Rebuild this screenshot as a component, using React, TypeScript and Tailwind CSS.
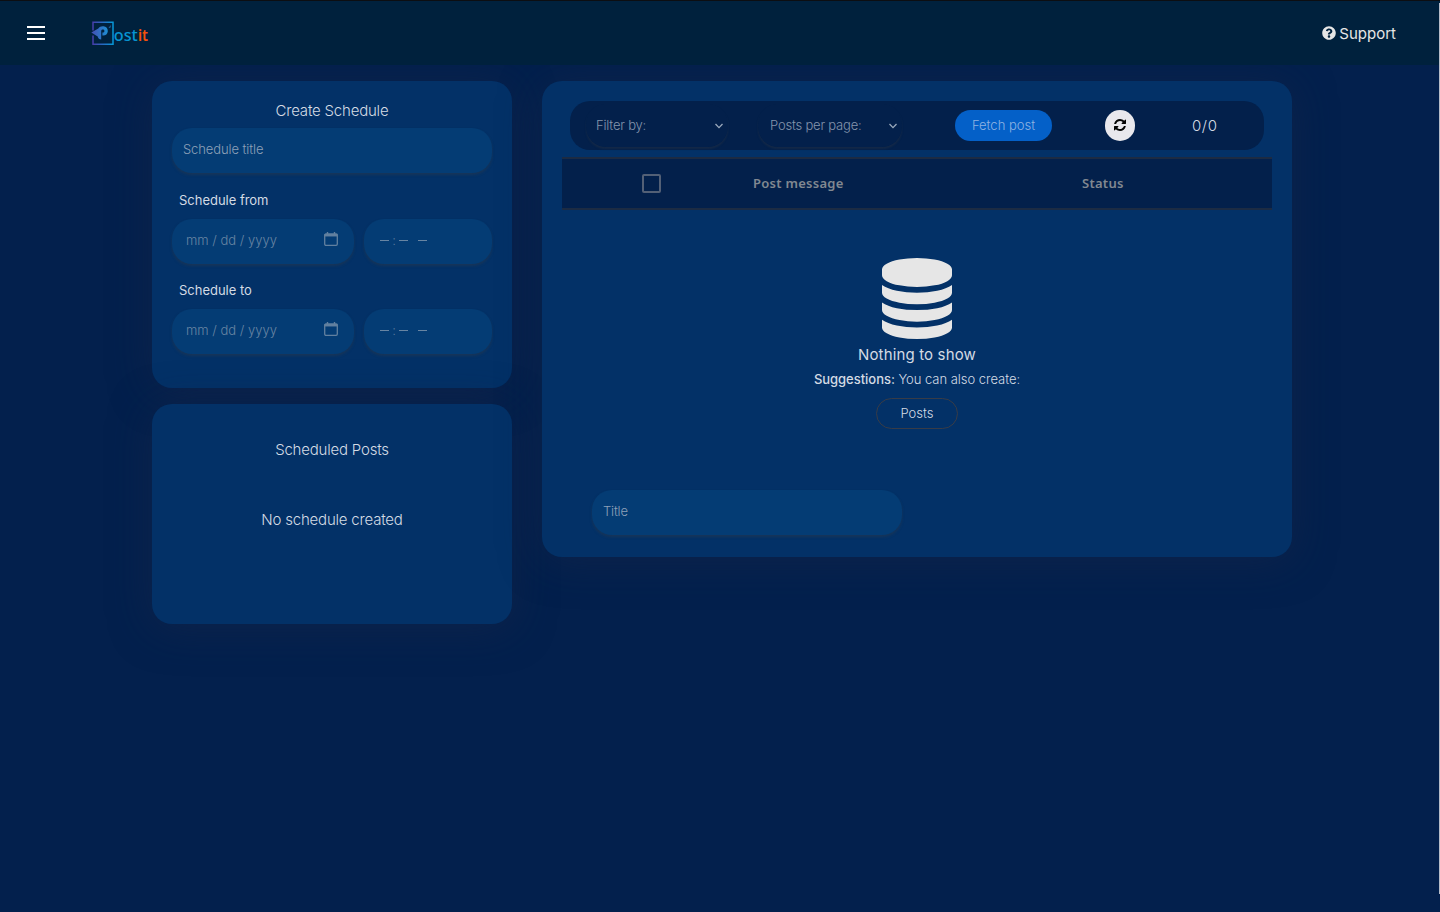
import type { ReactNode } from "react";
import { FaQuestionCircle } from "react-icons/fa";

const FIELD =
  "flex h-[45px] items-center rounded-[20px] bg-[#043c74] shadow-[0_2px_3px_rgba(60,60,60,0.35)]";
const CARD = "rounded-[20px] bg-[#033167] shadow-[0_4px_40px_rgba(22,38,72,0.55)]";

function Logo() {
  return (
    <svg width="58" height="26" viewBox="0 0 58 26" className="block">
      <defs>
        <linearGradient id="frame" gradientUnits="userSpaceOnUse" x1="1" x2="22" y1="0" y2="0">
          <stop offset="0" stopColor="#4a3aa8" />
          <stop offset="1" stopColor="#0698d8" />
        </linearGradient>
        <linearGradient id="bird" gradientUnits="userSpaceOnUse" x1="1" x2="17" y1="0" y2="0">
          <stop offset="0" stopColor="#4550b4" />
          <stop offset="1" stopColor="#1c90d4" />
        </linearGradient>
      </defs>
      <path d="M2 10.5V2.2H22V24.2H2V15.5" fill="none" stroke="url(#frame)" strokeWidth="1.5" />
      <path
        d="M0.3 12.6 7.3 8.4C8.4 6.7 10.5 6 12.4 6.2C15.2 6.4 17 8.6 16.8 11.2C16.6 14.2 14.3 15.8 11.4 15.4V12.6C12.7 12.7 13.4 11.9 13.4 10.9C13.3 9.8 12.3 9.3 11.3 9.6C10.4 9.9 10.2 10.6 10.2 11.4V19.6C8.4 19.4 7.1 18.6 6.7 16.6Z"
        fill="url(#bird)"
      />
      <path d="M17.5 7.8 20 5 19.4 7.8Z" fill="#246bb0" />
      <text x="22.8" y="20.5" fontFamily="Noto Sans, sans-serif" fontWeight="500" fontSize="16" textLength="24" lengthAdjust="spacingAndGlyphs" fill="#0795d3">ost</text>
      <text x="47" y="20.5" fontFamily="Noto Sans, sans-serif" fontWeight="600" fontSize="16" textLength="10" lengthAdjust="spacingAndGlyphs" fill="#f4510b">it</text>
    </svg>
  );
}

function CalendarIcon() {
  return (
    <svg width="14" height="14" viewBox="0 0 14 14" className="mb-1 block text-[#62809f]" fill="none" stroke="currentColor">
      <rect x="0.7" y="2" width="12.6" height="11.3" rx="1.2" strokeWidth="1.3" />
      <path d="M0.5 3.2H13.5" strokeWidth="2.5" />
      <path d="M3.5 0V2M10.5 0V2" strokeWidth="1.4" />
    </svg>
  );
}

function DatabaseIcon() {
  return (
    <svg width="70" height="81" viewBox="0 0 1536 1792" preserveAspectRatio="none" className="block" fill="#e6e6e6">
      <path d="M768 768q237 0 443-43t325-127v170q0 69-103 128t-280 93.5-385 34.5-385-34.5-280-93.5-103-128v-170q119 84 325 127t443 43zM768 1536q237 0 443-43t325-127v170q0 69-103 128t-280 93.5-385 34.5-385-34.5-280-93.5-103-128v-170q119 84 325 127t443 43zM768 1152q237 0 443-43t325-127v170q0 69-103 128t-280 93.5-385 34.5-385-34.5-280-93.5-103-128v-170q119 84 325 127t443 43zM768 0q208 0 385 34.5t280 93.5 103 128v128q0 69-103 128t-280 93.5-385 34.5-385-34.5-280-93.5-103-128v-128q0-69 103-128t280-93.5 385-34.5z" />
    </svg>
  );
}

function RefreshIcon() {
  return (
    <svg width="12" height="12" viewBox="0 128 1536 1536" className="mb-px block" fill="#050505">
      <path d="M1511 1056q0 5-1 7-64 268-268 434.5t-478 166.5q-146 0-282.5-55t-243.5-157l-129 129q-19 19-45 19t-45-19-19-45v-448q0-26 19-45t45-19h448q26 0 45 19t19 45-19 45l-137 137q71 66 161 102t187 36q134 0 250-65t186-179q11-17 53-117 8-23 30-23h192q13 0 22.5 9.5t9.5 22.5zm25-800v448q0 26-19 45t-45 19h-448q-26 0-45-19t-19-45 19-45l138-138q-148-137-349-137-134 0-250 65t-186 179q-11 17-53 117-8 23-30 23h-199q-13 0-22.5-9.5t-9.5-22.5v-7q65-268 270-434.5t480-166.5q146 0 284 55.5t245 156.5l130-129q19-19 45-19t45 19 19 45z" />
    </svg>
  );
}

function Select({ label, className }: { label: ReactNode; className: string }) {
  return (
    <div className={`flex h-[43px] items-center justify-between rounded-[20px] pr-[5px] text-[13px] tracking-[-0.2px] text-[#8595ad] shadow-[0_2px_2px_rgba(60,60,60,0.28)] ${className}`}>
      {label}
      <svg width="8" height="6" viewBox="0 0 8 6" fill="none" stroke="#9caabd" strokeWidth="1.3">
        <path d="M0.5 1 4 4.6 7.5 1" />
      </svg>
    </div>
  );
}

function DateRow() {
  return (
    <div className="flex gap-[10px] text-[13px] text-[#6885a3]">
      <div className={`${FIELD} w-[182px] justify-between pr-4 pb-0.5 pl-[14px]`}>
        <span>mm / dd / yyyy</span>
        <CalendarIcon />
      </div>
      <div className={`${FIELD} w-32 gap-1 pb-0.5 pl-4`}>
        <span className="h-px w-[9px] bg-[#6885a3]" />
        <span className="-mx-px w-1 text-center">:</span>
        <span className="h-px w-[9px] bg-[#6885a3]" />
        <span className="ml-1.5 h-px w-[9px] bg-[#6885a3]" />
      </div>
    </div>
  );
}

export default function App() {
  return (
    <div className="relative flex h-[912px] w-[1440px] flex-col overflow-hidden bg-[#03204d] font-['Inter',sans-serif] font-light text-[#d4dbe4]">
      <header className="z-10 flex h-[65px] shrink-0 items-center border-t border-[#0c0e12] bg-[#00213d] pr-11 pl-[27px] text-[15px]">
        <div className="flex w-[18px] flex-col gap-1">
          <div className="h-0.5 bg-white" />
          <div className="h-0.5 bg-white" />
          <div className="h-0.5 bg-white" />
        </div>
        <div className="ml-[46px]">
          <Logo />
        </div>
        <div className="ml-auto flex items-center gap-[3px] font-normal text-[#e6e6e6]">
          <FaQuestionCircle size={14} />
          <span className="pt-0.5">Support</span>
        </div>
      </header>

      <main className="flex items-start gap-[30px] pt-4 pl-[152px]">
        <div className="flex w-[360px] shrink-0 flex-col gap-4">
          <section className={`${CARD} h-[307px] px-5 pt-[18px]`}>
            <h2 className="text-center text-[15px] leading-6 tracking-[-0.2px]">Create Schedule</h2>
            <div className={`${FIELD} mt-[5px] px-[11px] pb-0.5 text-[13px] tracking-[-0.1px] text-[#8da0b8]`}>Schedule title</div>
            <div className="mt-[17px] mb-[9px] pl-[7px] text-[13px] leading-5 font-normal tracking-[-0.02px]">Schedule from</div>
            <DateRow />
            <div className="mt-[16px] mb-[9px] pl-[7px] text-[13px] leading-5 font-normal tracking-[-0.02px]">Schedule to</div>
            <DateRow />
          </section>
          <section className={`${CARD} h-[220px] pt-[34px] text-center text-[15px] leading-6 tracking-[-0.2px]`}>
            <h2>Scheduled Posts</h2>
            <p className="mt-[46px]">No schedule created</p>
          </section>
        </div>

        <section className={`${CARD} h-[476px] w-[750px] shrink-0 px-5 pt-5`}>
          <div className="mx-2 flex h-[49px] items-center rounded-[20px] bg-[#03204b] pl-4">
            <Select className="w-[142px] pl-2.5" label={<span>Filter by:</span>} />
            <Select className="ml-[30px] w-[144px] pl-3" label={<span>Posts per page:</span>} />
            <button className="ml-[53px] h-[31px] w-[97px] rounded-full bg-[#0460c8] text-[13px] text-[#8fb3e2]">Fetch post</button>
            <button className="ml-[53px] flex h-[31px] w-[30px] items-center justify-center rounded-full bg-[#e9e8ed]">
              <RefreshIcon />
            </button>
            <span className="ml-[57px] pt-0.5 text-[15px] tracking-[0.6px]">0/0</span>
          </div>

          <div className="mt-[7px] flex h-[53px] items-center border-y-2 border-[#1c2b43] bg-[#03204b] font-['Noto_Sans',sans-serif] text-[13px] font-semibold tracking-[0.27px] text-[#818891]">
            <div className="mb-px ml-20 size-[19px] rounded-[2px] border-2 border-[#536076]" />
            <span className="ml-[92px] w-[329px]">Post message</span>
            <span>Status</span>
          </div>

          <div className="mt-12 flex flex-col items-center">
            <DatabaseIcon />
            <p className="mt-1 text-[15px] leading-6 font-normal tracking-[0.15px]">Nothing to show</p>
            <p className="mt-[2px] text-[13px] leading-5 tracking-[-0.03px]">
              <span className="font-medium">Suggestions:</span> You can also create:
            </p>
            <button className="mt-[9px] h-[31px] w-[82px] rounded-full border border-[#383c47] text-[13px]">Posts</button>
          </div>

          <div className={`${FIELD} mt-[61px] ml-[30px] w-[310px] px-[11px] pb-0.5 text-[13px] tracking-[-0.2px] text-[#8da0b8]`}>Title</div>
        </section>
      </main>
      <div className="absolute top-[3px] right-0 z-20 h-[891px] w-px bg-[#b5bcc8]" />
    </div>
  );
}
